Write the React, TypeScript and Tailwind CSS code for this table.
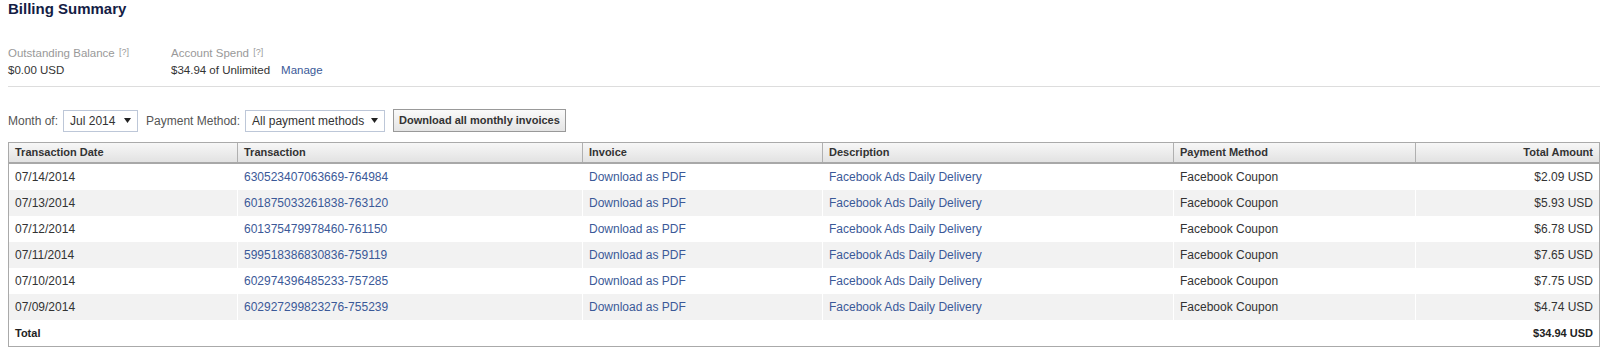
const rows = [
  { date: '07/14/2014', txn: '630523407063669-764984', amount: '$2.09 USD' },
  { date: '07/13/2014', txn: '601875033261838-763120', amount: '$5.93 USD' },
  { date: '07/12/2014', txn: '601375479978460-761150', amount: '$6.78 USD' },
  { date: '07/11/2014', txn: '599518386830836-759119', amount: '$7.65 USD' },
  { date: '07/10/2014', txn: '602974396485233-757285', amount: '$7.75 USD' },
  { date: '07/09/2014', txn: '602927299823276-755239', amount: '$4.74 USD' },
];

const cols = 'grid grid-cols-[228px_345px_240px_351px_242px_184px]';

function Arrow() {
  return (
    <svg width="7" height="5" viewBox="0 0 7 5" className="shrink-0">
      <polygon points="0,0 7,0 3.5,5" fill="#222" />
    </svg>
  );
}

function FakeSelect({ label, width }: { label: string; width: string }) {
  return (
    <div
      className={`flex h-[22px] items-center justify-between border border-[#bdc7d8] bg-white pl-[6px] pr-[6px] text-[12px] text-[#333] ${width}`}
    >
      <span>{label}</span>
      <Arrow />
    </div>
  );
}

export default function App() {
  return (
    <div className="h-[347px] w-[1600px] overflow-hidden bg-white font-['Liberation_Sans',Arial,sans-serif] text-[#333]">
      <div className="pl-2">
        <h1 className="text-[15px] font-bold leading-[18px] text-[#141d45]">Billing Summary</h1>

        <div className="mt-[27px] flex text-[11.5px] leading-[16px]">
          <div className="w-[163px]">
            <div className="text-[#999]">
              Outstanding Balance <span className="relative -top-[2px] ml-[1px] text-[9px] text-[#999]">[?]</span>
            </div>
            <div>$0.00 USD</div>
          </div>
          <div>
            <div className="text-[#999]">
              Account Spend <span className="relative -top-[2px] ml-[1px] text-[9px] text-[#999]">[?]</span>
            </div>
            <div>
              $34.94 of Unlimited
              <a className="ml-[11px] text-[#3b5998]">Manage</a>
            </div>
          </div>
        </div>

        <div className="mt-[8px] h-px bg-[#dddddd]" />

        <div className="mt-[22px] flex h-[23px] items-center text-[12px] text-[#555]">
          <span>Month of:</span>
          <div className="ml-[5px]">
            <FakeSelect label="Jul 2014" width="w-[75px]" />
          </div>
          <span className="ml-[8px]">Payment Method:</span>
          <div className="ml-[5px]">
            <FakeSelect label="All payment methods" width="w-[140px]" />
          </div>
          <button className="ml-[8px] h-[23px] border border-[#999] bg-gradient-to-b from-[#fafafa] to-[#e4e4e4] px-[5px] text-[11px] font-bold text-[#333]">
            Download all monthly invoices
          </button>
        </div>

        <div className="mt-[10px] w-[1592px] border border-[#aaaaaa]">
          <div
            className={`${cols} h-[21px] border-b-2 border-[#a8a8a8] bg-gradient-to-b from-[#f7f7f7] to-[#e2e2e2] text-[11px] font-bold text-[#333]`}
          >
            <div className="flex items-center px-1.5">Transaction Date</div>
            <div className="flex items-center border-l border-[#b0b0b0] px-1.5">Transaction</div>
            <div className="flex items-center border-l border-[#b0b0b0] px-1.5">Invoice</div>
            <div className="flex items-center border-l border-[#b0b0b0] px-1.5">Description</div>
            <div className="flex items-center border-l border-[#b0b0b0] px-1.5">Payment Method</div>
            <div className="flex items-center justify-end border-l border-[#b0b0b0] px-1.5">Total Amount</div>
          </div>

          {rows.map((r, i) => (
            <div
              key={r.txn}
              className={`${cols} h-[26px] text-[12px] ${i % 2 === 1 ? 'bg-[#f2f2f2]' : 'bg-white'}`}
            >
              <div className="flex items-center px-1.5 text-[#333]">{r.date}</div>
              <div className="flex items-center border-l border-white px-1.5 text-[#3b5998]">{r.txn}</div>
              <div className="flex items-center border-l border-white px-1.5 text-[#3b5998]">Download as PDF</div>
              <div className="flex items-center border-l border-white px-1.5 text-[#3b5998]">
                Facebook Ads Daily Delivery
              </div>
              <div className="flex items-center border-l border-white px-1.5 text-[#333]">Facebook Coupon</div>
              <div className="flex items-center justify-end border-l border-white px-1.5 text-[#333]">
                {r.amount}
              </div>
            </div>
          ))}

          <div className={`${cols} h-[26px] bg-white text-[11px] font-bold text-[#222]`}>
            <div className="flex items-center px-1.5">Total</div>
            <div />
            <div />
            <div />
            <div />
            <div className="flex items-center justify-end px-1.5">$34.94 USD</div>
          </div>
        </div>
      </div>
    </div>
  );
}
